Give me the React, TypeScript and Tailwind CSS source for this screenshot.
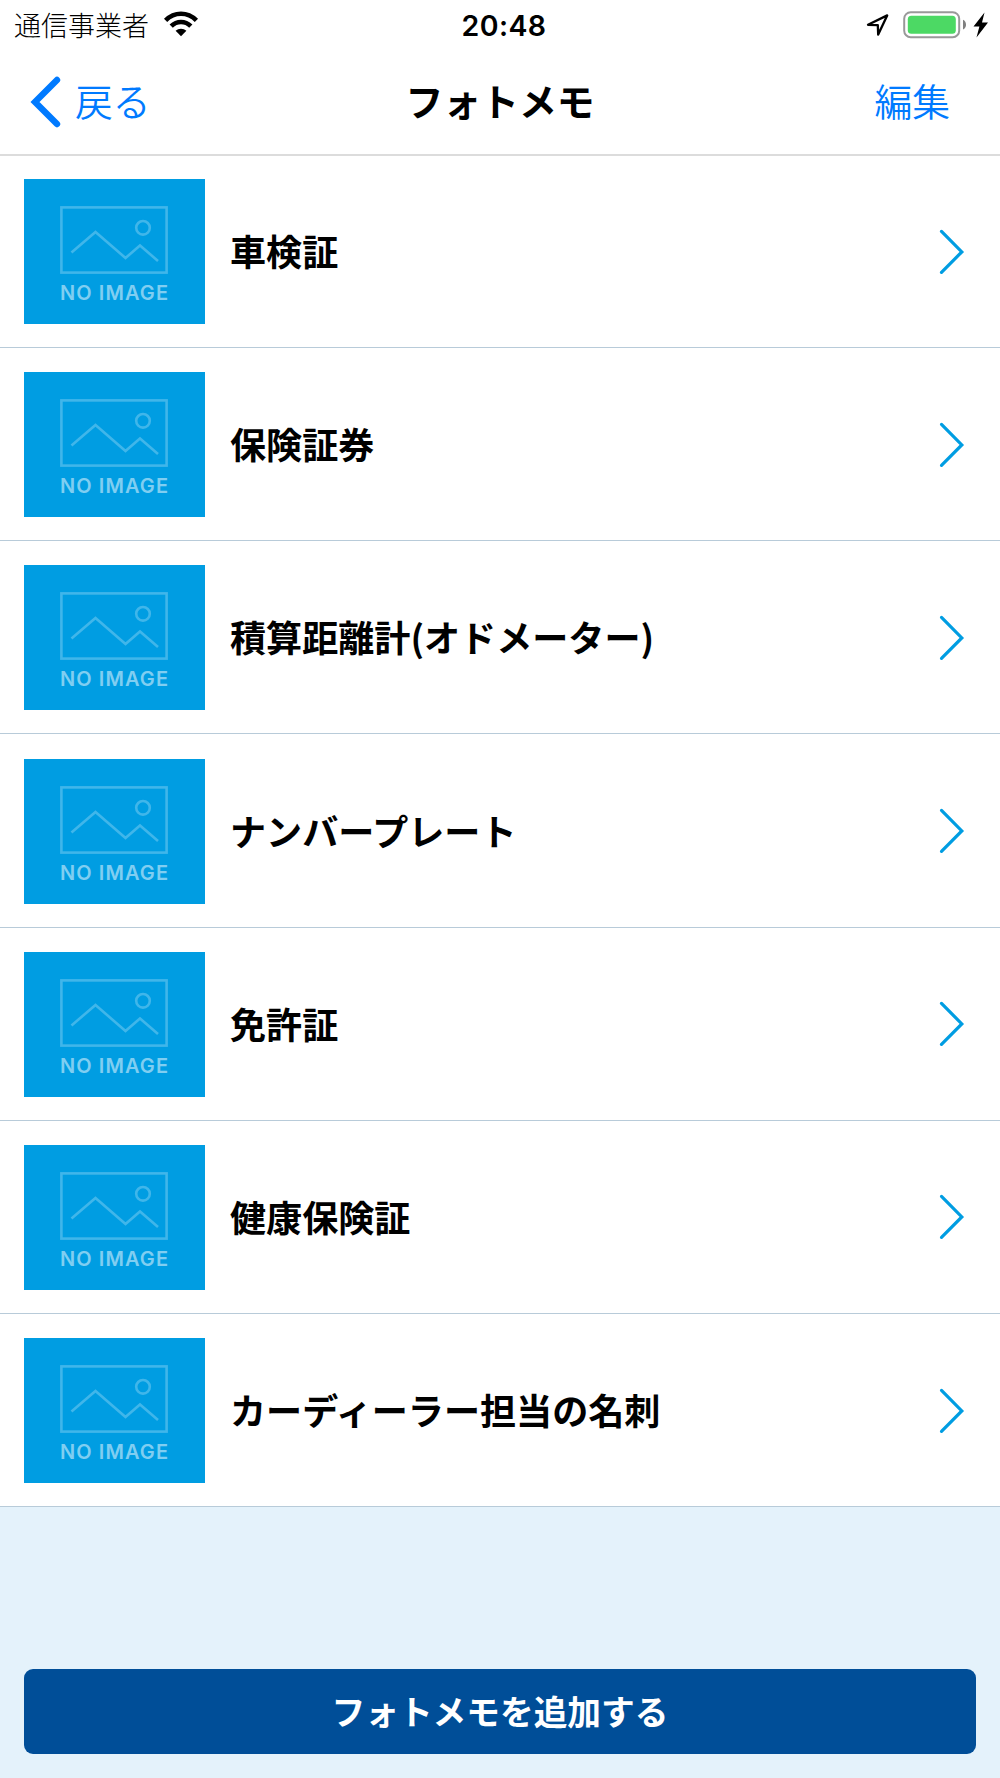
import React from 'react';

interface PhotoMemo {
  id: string;
  title: string;
}

const memos: PhotoMemo[] = [
  { id: 'inspection', title: '車検証' },
  { id: 'insurance', title: '保険証券' },
  { id: 'odometer', title: '積算距離計(オドメーター)' },
  { id: 'plate', title: 'ナンバープレート' },
  { id: 'license', title: '免許証' },
  { id: 'health', title: '健康保険証' },
  { id: 'dealer', title: 'カーディーラー担当の名刺' },
];

function StatusBar() {
  return (
    <div className="grid h-[50px] grid-cols-3 items-center">
      <div className="flex items-center gap-[14px] pl-[14px]">
        <span className="text-[27px] leading-[50px] font-light">通信事業者</span>
        <svg width="36" height="26" viewBox="0 0 36 26" className="-mt-0.5">
          <path d="M2.6 9.4C11.5 0.6 24.5 0.6 33.4 9.4" fill="none" stroke="#000" strokeWidth="4.6" />
          <path d="M8.2 15.1C13.8 9.6 22.2 9.6 27.8 15.1" fill="none" stroke="#000" strokeWidth="4.6" />
          <path d="M12.6 19.8C15.6 16.9 20.4 16.9 23.4 19.8L18 25.2Z" fill="#000" />
        </svg>
      </div>
      <div className="pt-px pl-[8px] text-center font-['Inter',sans-serif] text-[28.5px] leading-[49px] font-semibold tracking-[0.4px]">
        20:48
      </div>
      <div className="flex items-center justify-end pr-[11px]">
        <svg width="24" height="24" viewBox="0 0 24 24">
          <path
            d="M2 11.8L21.2 2.4L12.2 21.6L11.8 12.1Z"
            fill="none"
            stroke="#000"
            strokeWidth="2.3"
            strokeLinejoin="round"
          />
        </svg>
        <svg width="64" height="28" viewBox="0 0 64 28" className="-mt-px ml-[13px]">
          <rect x="1.2" y="1.2" width="55" height="25" rx="6.5" fill="none" stroke="#999" strokeWidth="2" />
          <rect x="4.8" y="4.8" width="48" height="18" rx="3.5" fill="#4cd964" />
          <path d="M60 8.8C64 10.5 64 17 60 18.6Z" fill="#808080" />
        </svg>
        <svg width="16" height="26" viewBox="0 0 16 26" className="-mt-px ml-[6px]">
          <path d="M11.5 0.5L0.5 14.5H6.4L3.5 25.5L15 10.5H9Z" fill="#000" />
        </svg>
      </div>
    </div>
  );
}

function NavBar() {
  return (
    <div className="grid h-[106px] grid-cols-3 items-center border-b-2 border-[#dcdcdc] pb-px text-[37.8px] leading-[54px]">
      <button type="button" className="flex items-center gap-[14px] pl-[30px] font-[350] text-[#007aff]">
        <svg width="31" height="52" viewBox="0 0 31 52">
          <path
            d="M27 4L5 26L27 48"
            fill="none"
            stroke="currentColor"
            strokeWidth="6.4"
            strokeLinecap="round"
            strokeLinejoin="miter"
          />
        </svg>
        <span className="pb-[4px]">戻る</span>
      </button>
      <h1 className="pb-[4px] text-center font-bold">フォトメモ</h1>
      <button type="button" className="pr-[50px] pb-[4px] text-right font-[350] text-[#007aff]">
        編集
      </button>
    </div>
  );
}

function NoImage() {
  return (
    <div className="flex h-[145px] w-[181px] shrink-0 flex-col items-center bg-[#009de2] pt-[27px] pr-px">
      <svg width="108" height="68" viewBox="0 0 108 68" fill="none" stroke="#40b6ea" strokeWidth="2.6">
        <rect x="1.4" y="1.4" width="105.2" height="65.2" />
        <circle cx="83" cy="21.8" r="6.8" />
        <path d="M11.5 46.5L35.5 26L65.5 52L80 39.5L98 55" />
      </svg>
      <span className="mt-[6px] pl-[1px] font-['Inter',sans-serif] text-[20px] leading-[26px] font-semibold tracking-[1.1px] whitespace-nowrap text-[#80cef1]">
        NO IMAGE
      </span>
    </div>
  );
}

function MemoRow({ memo }: { memo: PhotoMemo }) {
  return (
    <li className="flex h-[193.2px] items-center border-b border-[#b8cbd9] bg-white pt-[1.2px] pr-[35px] pl-[24px]">
      <NoImage />
      <span className="ml-[25px] flex-1 pb-[3px] text-[36.1px] leading-[52px] font-bold">{memo.title}</span>
      <svg width="26" height="46" viewBox="0 0 26 46">
        <path
          d="M2.5 2.4L22.8 22.9L2.5 43.4"
          fill="none"
          stroke="#009de2"
          strokeWidth="3.2"
          strokeLinecap="round"
        />
      </svg>
    </li>
  );
}

export default function App() {
  return (
    <div className="flex h-[1778px] w-[1000px] flex-col overflow-hidden bg-[#e4f2fb] font-['Noto_Sans_CJK_JP',sans-serif] text-black">
      <header className="relative z-10 bg-white">
        <StatusBar />
        <NavBar />
      </header>
      {/* first row tucks under the nav bar's hairline */}
      <ul className="-mt-[1.2px]">
        {memos.map((memo) => (
          <MemoRow key={memo.id} memo={memo} />
        ))}
      </ul>
      <div className="mt-auto px-[24px] pb-[24px]">
        <button
          type="button"
          className="h-[85px] w-full rounded-[9px] bg-[#004e98] pb-[2px] text-[33.7px] leading-[50px] font-bold text-white"
        >
          フォトメモを追加する
        </button>
      </div>
    </div>
  );
}
